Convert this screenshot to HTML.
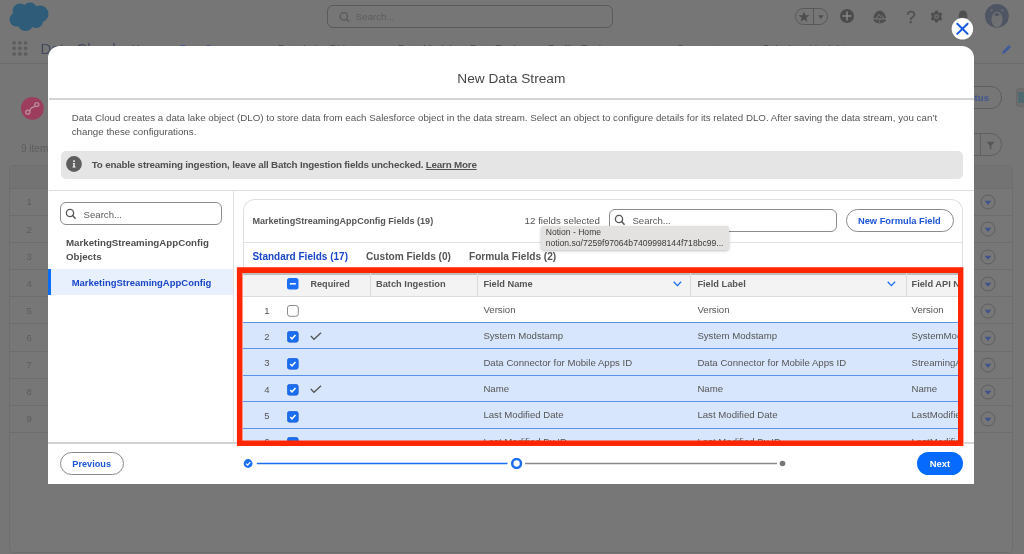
<!DOCTYPE html>
<html><head><meta charset="utf-8">
<style>
*{box-sizing:border-box;margin:0;padding:0}
html,body{width:1024px;height:554px;overflow:hidden}
body{background:#767676;font-family:"Liberation Sans",sans-serif;position:relative}
.a{position:absolute}
.t{position:absolute;white-space:nowrap;line-height:1}
</style></head>
<body><div id="root" style="position:absolute;left:0;top:0;width:1024px;height:554px;will-change:transform">
<div class="a" style="left:0px;top:0px;width:1024px;height:64px;background:#767676;border-bottom:1px solid #6b6b6b"></div>
<div class="a" style="left:9.2px;top:164.7px;width:1003.8px;height:388px;background:#777777;border:1px solid #6e6e6e;border-radius:4px"></div>
<svg class="a" style="left:7px;top:1px" width="45" height="31" viewBox="0 0 45 31">
<g fill="#2f5d79"><circle cx="13" cy="10" r="7.5"/><circle cx="23" cy="9" r="7.5"/><circle cx="33" cy="13" r="8.5"/><circle cx="9.5" cy="18.5" r="7"/><circle cx="18.5" cy="22" r="8"/><circle cx="29" cy="20" r="7"/><circle cx="21" cy="15" r="8"/></g></svg>
<div class="a" style="left:327.4px;top:5.1px;width:285.6px;height:22.6px;border:1.2px solid #5a5a5a;border-radius:6px"></div>
<svg class="a" style="left:338px;top:10px" width="14" height="14" viewBox="0 0 14 14"><circle cx="5.8" cy="6.4" r="3.7" fill="none" stroke="#5a5a5a" stroke-width="1.3"/><path d="M8.5 9.2 L11.2 11.8" stroke="#5a5a5a" stroke-width="1.4"/></svg>
<div class="t" style="left:355.80px;top:11.69px;font-size:9.7px;color:#5d5d5d;">Search...</div>
<div class="a" style="left:795.1px;top:8px;width:33px;height:16.7px;border:1.4px solid #585858;border-radius:9px"></div>
<div class="a" style="left:812.5px;top:8.5px;width:1.2px;height:16px;background:#585858"></div>
<svg class="a" style="left:797.9px;top:10.5px" width="12" height="12" viewBox="-6 -6 12 12"><path d="M0,-5.6 L1.45,-1.8 L5.6,-1.8 L2.3,0.75 L3.5,4.8 L0,2.4 L-3.5,4.8 L-2.3,0.75 L-5.6,-1.8 L-1.45,-1.8Z" fill="#4e4e4e"/></svg>
<svg class="a" style="left:817.5px;top:15.2px" width="6" height="4.2"><path d="M0.2 0.2 L5.6 0.2 L2.9 3.9z" fill="#4e4e4e"/></svg>
<svg class="a" style="left:839.9px;top:9.2px" width="14" height="14"><circle cx="7" cy="7" r="7" fill="#4b4b4b"/><path d="M7 2.4v9.2M2.4 7h9.2" stroke="#878787" stroke-width="1.5"/></svg>
<svg class="a" style="left:873px;top:9.5px" width="14" height="14" viewBox="0 0 14 14"><path d="M0.4 8.3 C0.6 4.5 3.5 0.6 6.7 0.5 C9.9 0.6 12.8 4.5 13 8.3 Z" fill="#4e4e4e"/><path d="M3.5 8 L6 4.5 L7.5 6.5 L8.5 5.5 L10.5 8" fill="none" stroke="#767676" stroke-width="1"/><path d="M0.3 9.5 H13.1 C12.8 11.8 10 13.4 6.7 13.4 C3.4 13.4 0.6 11.8 0.3 9.5Z" fill="#4e4e4e"/><path d="M7.2 9.5 L6.4 11 L7 13.4" stroke="#767676" stroke-width="0.8" fill="none"/></svg>
<div class="t" style="left:906.20px;top:8.51px;font-size:17px;color:#505050;-webkit-text-stroke:0.3px #505050">?</div>
<svg class="a" style="left:930.4px;top:10.1px" width="13" height="13" viewBox="-6.5 -6.5 13 13"><g fill="#4e4e4e"><circle r="4.6"/><g id="th"><rect x="-1.5" y="-6" width="3" height="3" rx="0.8"/></g><use href="#th" transform="rotate(60)"/><use href="#th" transform="rotate(120)"/><use href="#th" transform="rotate(180)"/><use href="#th" transform="rotate(240)"/><use href="#th" transform="rotate(300)"/></g><circle r="2.5" fill="#6c6c6c"/><circle r="1" fill="#4e4e4e"/></svg>
<svg class="a" style="left:957.5px;top:9.5px" width="10" height="12"><path d="M5 0.5 C8 0.5 9.2 3 9.2 5.5 L9.2 11.5 H0.8 L0.8 5.5 C0.8 3 2 0.5 5 0.5Z" fill="#4e4e4e"/></svg>
<svg class="a" style="left:984px;top:3.2px" width="26" height="26" viewBox="0 0 26 26"><defs><clipPath id="avc"><circle cx="12.9" cy="12.9" r="11.9"/></clipPath></defs><circle cx="12.9" cy="12.9" r="11.9" fill="#4f5562"/><g clip-path="url(#avc)"><ellipse cx="13" cy="16.5" rx="5.6" ry="7.7" fill="#6f7072"/></g><circle cx="7.5" cy="7.5" r="1.1" fill="#6f7072"/><circle cx="18.3" cy="7.5" r="1.1" fill="#6f7072"/><ellipse cx="12.9" cy="11.5" rx="2.5" ry="1.5" fill="#4f5562"/></svg>
<svg class="a" style="left:12px;top:40px" width="17" height="17"><g fill="#5e5e5e"><circle cx="2.1" cy="2.8" r="1.9"/><circle cx="7.9" cy="2.8" r="1.9"/><circle cx="13.6" cy="2.8" r="1.9"/><circle cx="2.1" cy="8.3" r="1.9"/><circle cx="7.9" cy="8.3" r="1.9"/><circle cx="13.6" cy="8.3" r="1.9"/><circle cx="2.1" cy="13.9" r="1.9"/><circle cx="7.9" cy="13.9" r="1.9"/><circle cx="13.6" cy="13.9" r="1.9"/></g></svg>
<div class="t" style="left:40.50px;top:41.30px;font-size:15px;color:#414a5c;">Data Cloud</div>
<div class="t" style="left:132.00px;top:43.71px;font-size:10.5px;color:#4a4a4a;">Home</div>
<div class="t" style="left:180.00px;top:43.71px;font-size:10.5px;color:#3a4f8f;">Data Streams</div>
<div class="t" style="left:278.00px;top:43.71px;font-size:10.5px;color:#4a4a4a;">Data Lake Objects</div>
<div class="t" style="left:398.00px;top:43.71px;font-size:10.5px;color:#4a4a4a;">Data Model</div>
<div class="t" style="left:470.00px;top:43.71px;font-size:10.5px;color:#4a4a4a;">Data Explorer</div>
<div class="t" style="left:548.00px;top:43.71px;font-size:10.5px;color:#4a4a4a;">Profile Explorer</div>
<div class="t" style="left:762.00px;top:43.71px;font-size:10.5px;color:#4a4a4a;">Calculated Insights</div>
<div class="t" style="left:677.00px;top:43.71px;font-size:10.5px;color:#4a4a4a;">Segments</div>
<svg class="a" style="left:1000px;top:44px" width="12" height="12"><path d="M2 10 L3 7 L9 1 L11 3 L5 9 Z" fill="#3f5a99"/></svg>
<svg class="a" style="left:21px;top:97.2px" width="23" height="23"><circle cx="11.4" cy="11.4" r="11.35" fill="#9c3d5e"/><g fill="none" stroke="#b98a9a" stroke-width="1.4"><circle cx="6.8" cy="15.2" r="2"/><circle cx="15.8" cy="7.6" r="2"/><path d="M8.6 14 C10 12 9.5 10.5 11.5 10.5 C13.5 10.5 12.5 9 14.2 8.6"/></g></svg>
<div class="t" style="left:21.00px;top:144.03px;font-size:10px;color:#5c5c5c;">9 items</div>
<div class="a" style="left:10.2px;top:165.7px;width:1001.8px;height:22.3px;background:#737373;border-radius:3px 3px 0 0"></div>
<div class="a" style="left:10px;top:187.8px;width:1003px;height:1px;background:#6d6d6d"></div>
<div class="a" style="left:10px;top:214.92000000000002px;width:1003px;height:1px;background:#6d6d6d"></div>
<div class="a" style="left:10px;top:242.04000000000002px;width:1003px;height:1px;background:#6d6d6d"></div>
<div class="a" style="left:10px;top:269.16px;width:1003px;height:1px;background:#6d6d6d"></div>
<div class="a" style="left:10px;top:296.28000000000003px;width:1003px;height:1px;background:#6d6d6d"></div>
<div class="a" style="left:10px;top:323.4px;width:1003px;height:1px;background:#6d6d6d"></div>
<div class="a" style="left:10px;top:350.52px;width:1003px;height:1px;background:#6d6d6d"></div>
<div class="a" style="left:10px;top:377.64px;width:1003px;height:1px;background:#6d6d6d"></div>
<div class="a" style="left:10px;top:404.76px;width:1003px;height:1px;background:#6d6d6d"></div>
<div class="a" style="left:10px;top:431.88px;width:1003px;height:1px;background:#6d6d6d"></div>
<div class="t" style="left:26.50px;top:197.46px;font-size:9.5px;color:#5c5c5c;">1</div>
<svg class="a" style="left:980px;top:194.30px" width="16" height="16"><circle cx="8" cy="8" r="7" fill="none" stroke="#5e5e5e" stroke-width="1"/><path d="M4.6 6.7 H11.4 L8 10.8Z" fill="#40528a"/></svg>
<div class="t" style="left:26.50px;top:224.58px;font-size:9.5px;color:#5c5c5c;">2</div>
<svg class="a" style="left:980px;top:221.42px" width="16" height="16"><circle cx="8" cy="8" r="7" fill="none" stroke="#5e5e5e" stroke-width="1"/><path d="M4.6 6.7 H11.4 L8 10.8Z" fill="#40528a"/></svg>
<div class="t" style="left:26.50px;top:251.70px;font-size:9.5px;color:#5c5c5c;">3</div>
<svg class="a" style="left:980px;top:248.54px" width="16" height="16"><circle cx="8" cy="8" r="7" fill="none" stroke="#5e5e5e" stroke-width="1"/><path d="M4.6 6.7 H11.4 L8 10.8Z" fill="#40528a"/></svg>
<div class="t" style="left:26.50px;top:278.82px;font-size:9.5px;color:#5c5c5c;">4</div>
<svg class="a" style="left:980px;top:275.66px" width="16" height="16"><circle cx="8" cy="8" r="7" fill="none" stroke="#5e5e5e" stroke-width="1"/><path d="M4.6 6.7 H11.4 L8 10.8Z" fill="#40528a"/></svg>
<div class="t" style="left:26.50px;top:305.94px;font-size:9.5px;color:#5c5c5c;">5</div>
<svg class="a" style="left:980px;top:302.78px" width="16" height="16"><circle cx="8" cy="8" r="7" fill="none" stroke="#5e5e5e" stroke-width="1"/><path d="M4.6 6.7 H11.4 L8 10.8Z" fill="#40528a"/></svg>
<div class="t" style="left:26.50px;top:333.06px;font-size:9.5px;color:#5c5c5c;">6</div>
<svg class="a" style="left:980px;top:329.90px" width="16" height="16"><circle cx="8" cy="8" r="7" fill="none" stroke="#5e5e5e" stroke-width="1"/><path d="M4.6 6.7 H11.4 L8 10.8Z" fill="#40528a"/></svg>
<div class="t" style="left:26.50px;top:360.18px;font-size:9.5px;color:#5c5c5c;">7</div>
<svg class="a" style="left:980px;top:357.02px" width="16" height="16"><circle cx="8" cy="8" r="7" fill="none" stroke="#5e5e5e" stroke-width="1"/><path d="M4.6 6.7 H11.4 L8 10.8Z" fill="#40528a"/></svg>
<div class="t" style="left:26.50px;top:387.30px;font-size:9.5px;color:#5c5c5c;">8</div>
<svg class="a" style="left:980px;top:384.14px" width="16" height="16"><circle cx="8" cy="8" r="7" fill="none" stroke="#5e5e5e" stroke-width="1"/><path d="M4.6 6.7 H11.4 L8 10.8Z" fill="#40528a"/></svg>
<div class="t" style="left:26.50px;top:414.42px;font-size:9.5px;color:#5c5c5c;">9</div>
<svg class="a" style="left:980px;top:411.26px" width="16" height="16"><circle cx="8" cy="8" r="7" fill="none" stroke="#5e5e5e" stroke-width="1"/><path d="M4.6 6.7 H11.4 L8 10.8Z" fill="#40528a"/></svg>
<div class="a" style="left:930px;top:86.2px;width:71.5px;height:22.4px;border:1.1px solid #5e5e5e;border-radius:11px"></div>
<div class="t" style="left:974.60px;top:92.77px;font-size:9.6px;color:#415690;font-weight:bold;">tus</div>
<div class="a" style="left:1015.5px;top:88px;width:10px;height:19px;border:1px solid #686868;border-radius:3px;background:#6e6e6e"></div>
<div class="a" style="left:1017.5px;top:92px;width:7px;height:11px;background:#4e6a70"></div>
<div class="a" style="left:930px;top:133px;width:71.5px;height:22.5px;border:1px solid #606060;border-radius:0 11px 11px 0"></div>
<div class="a" style="left:979.5px;top:133px;width:1px;height:22.5px;background:#606060"></div>
<svg class="a" style="left:985.5px;top:140.5px" width="9" height="9"><path d="M0.5 0.8 H8.5 L5.3 4.6 V8.3 L3.7 8.3 V4.6Z" fill="#565656"/></svg>
<div class="a" style="left:48px;top:46px;width:926px;height:437.8px;background:#fff;border-radius:12px 12px 0 0"></div>
<div class="t" style="left:457.30px;top:71.50px;font-size:13.7px;color:#474747;">New Data Stream</div>
<div class="a" style="left:48.5px;top:98px;width:925.5px;height:1.5px;background:#d4d4d4"></div>
<div class="t" style="left:71.70px;top:113.34px;font-size:9.76px;color:#555;">Data Cloud creates a data lake object (DLO) to store data from each Salesforce object in the data stream. Select an object to configure details for its related DLO. After saving the data stream, you can’t</div>
<div class="t" style="left:71.70px;top:127.04px;font-size:9.76px;color:#555;">change these configurations.</div>
<div class="a" style="left:60.5px;top:150.5px;width:902.5px;height:28.5px;background:#e5e5e5;border-radius:5px"></div>
<svg class="a" style="left:66.1px;top:156.1px" width="16" height="16"><circle cx="8" cy="8" r="7.9" fill="#5e5e5e"/><circle cx="8" cy="5.1" r="0.95" fill="#fff"/><path d="M6.9 6.9 H8.7 V10.6 H9.5 V11.6 H6.6 V10.6 H7.4 V7.8 H6.9Z" fill="#fff"/></svg>
<div class="t" style="left:91.80px;top:160.00px;font-size:9.8px;color:#505050;font-weight:bold;letter-spacing:-0.19px">To enable streaming ingestion, leave all Batch Ingestion fields unchecked. <span style="text-decoration:underline">Learn More</span></div>
<div class="a" style="left:48.5px;top:190px;width:925.5px;height:1px;background:#dedede"></div>
<div class="a" style="left:232.6px;top:190.5px;width:1.4px;height:253px;background:#e2e2e2"></div>
<div class="a" style="left:60.2px;top:202.3px;width:161.8px;height:22.7px;border:1.1px solid #8c8c8c;border-radius:6px"></div>
<svg class="a" style="left:64.70px;top:207.60px" width="12" height="12" viewBox="0 0 12 12"><circle cx="5" cy="5" r="3.6" fill="none" stroke="#555" stroke-width="1.3"/><path d="M7.6 7.6 L10.1 10.2" stroke="#555" stroke-width="1.5" stroke-linecap="round"/></svg>
<div class="t" style="left:83.60px;top:209.77px;font-size:9.6px;color:#5a5a5a;">Search...</div>
<div class="t" style="left:66.00px;top:238.08px;font-size:9.71px;color:#4e4e4e;font-weight:bold;">MarketingStreamingAppConfig</div>
<div class="t" style="left:66.00px;top:251.58px;font-size:9.71px;color:#4e4e4e;font-weight:bold;">Objects</div>
<div class="a" style="left:48px;top:269px;width:184.6px;height:25.8px;background:#e9f0fd"></div>
<div class="a" style="left:48px;top:269px;width:3.2px;height:25.8px;background:#0b6cf5"></div>
<div class="t" style="left:71.70px;top:278.17px;font-size:9.49px;color:#1a46c8;font-weight:bold;">MarketingStreamingAppConfig</div>
<div class="a" style="left:242.8px;top:199.2px;width:720px;height:260px;border:1.2px solid #e0e0e0;border-bottom:none;border-radius:12px 12px 0 0"></div>
<div class="a" style="left:234px;top:443px;width:740px;height:40px;background:#fff"></div>
<div class="t" style="left:252.40px;top:216.82px;font-size:9.07px;color:#555;font-weight:bold;">MarketingStreamingAppConfig Fields (19)</div>
<div class="t" style="left:524.60px;top:216.04px;font-size:9.76px;color:#555;">12 fields selected</div>
<div class="a" style="left:609px;top:209px;width:228px;height:22.5px;border:1.1px solid #8c8c8c;border-radius:6px"></div>
<svg class="a" style="left:613.60px;top:214.10px" width="12" height="12" viewBox="0 0 12 12"><circle cx="5" cy="5" r="3.6" fill="none" stroke="#555" stroke-width="1.3"/><path d="M7.6 7.6 L10.1 10.2" stroke="#555" stroke-width="1.5" stroke-linecap="round"/></svg>
<div class="t" style="left:632.40px;top:215.97px;font-size:9.6px;color:#5a5a5a;">Search...</div>
<div class="a" style="left:846px;top:209px;width:107.5px;height:22.8px;border:1px solid #8a8a8a;border-radius:12px"></div>
<div class="t" style="left:857.90px;top:216.59px;font-size:9.34px;color:#1d55d6;font-weight:bold;">New Formula Field</div>
<div class="a" style="left:244px;top:241.5px;width:718px;height:1px;background:#e2e2e2"></div>
<div class="t" style="left:252.40px;top:251.84px;font-size:10.0px;color:#1a46c8;font-weight:bold;">Standard Fields (17)</div>
<div class="t" style="left:366.00px;top:251.72px;font-size:10.13px;color:#555;font-weight:bold;">Custom Fields (0)</div>
<div class="t" style="left:469.00px;top:251.72px;font-size:10.13px;color:#555;font-weight:bold;">Formula Fields (2)</div>
<div class="a" style="left:242.5px;top:273px;width:715.5px;height:167.5px;overflow:hidden;background:#fff">
<div class="a" style="left:0.0px;top:0px;width:715.5px;height:23px;background:#f3f3f3"></div>
<div class="a" style="left:0.0px;top:0.19999999999998863px;width:715.5px;height:1.4px;background:#bdbdbd"></div>
<div class="a" style="left:0.5px;top:22.5px;width:715px;height:1px;background:#dcdcdc"></div>
<div class="a" style="left:127.10000000000002px;top:0px;width:1px;height:23px;background:#dcdcdc"></div>
<div class="a" style="left:234.10000000000002px;top:0px;width:1px;height:23px;background:#dcdcdc"></div>
<div class="a" style="left:447.79999999999995px;top:0px;width:1px;height:23px;background:#dcdcdc"></div>
<div class="a" style="left:663.0px;top:0px;width:1px;height:23px;background:#dcdcdc"></div>
<svg class="a" style="left:44.5px;top:5.399999999999977px" width="12" height="12"><rect x="0" y="0" width="11.5" height="11.5" rx="2.5" fill="#1b6ef3"/><rect x="2.8" y="5" width="6" height="1.6" fill="#fff"/></svg>
<div class="t" style="left:68.00px;top:6.79px;font-size:9.11px;color:#555;font-weight:bold;">Required</div>
<div class="t" style="left:133.50px;top:6.64px;font-size:9.29px;color:#555;font-weight:bold;">Batch Ingestion</div>
<div class="t" style="left:240.90px;top:6.66px;font-size:9.26px;color:#555;font-weight:bold;">Field Name</div>
<div class="t" style="left:454.90px;top:6.66px;font-size:9.26px;color:#555;font-weight:bold;">Field Label</div>
<div class="t" style="left:669.00px;top:6.66px;font-size:9.26px;color:#555;font-weight:bold;">Field API Name</div>
<svg class="a" style="left:430.20000000000005px;top:8.199999999999989px" width="9" height="6"><path d="M0.7 0.7 L4.4 4.6 L8.1 0.7" fill="none" stroke="#1b6ef3" stroke-width="1.3"/></svg>
<svg class="a" style="left:644.9px;top:8.199999999999989px" width="9" height="6"><path d="M0.7 0.7 L4.4 4.6 L8.1 0.7" fill="none" stroke="#1b6ef3" stroke-width="1.3"/></svg>
<div class="t" style="left:21.70px;top:32.56px;font-size:9.5px;color:#555;">1</div>
<svg class="a" style="left:44.5px;top:32.39999999999998px" width="12" height="12"><rect x="0.5" y="0.5" width="10.8" height="10.8" rx="2.5" fill="#fff" stroke="#8a8a8a" stroke-width="1"/></svg>
<div class="t" style="left:240.90px;top:31.95px;font-size:9.63px;color:#555;">Version</div>
<div class="t" style="left:454.90px;top:31.95px;font-size:9.63px;color:#555;">Version</div>
<div class="t" style="left:669.00px;top:31.95px;font-size:9.63px;color:#555;">Version</div>
<div class="a" style="left:0.5px;top:48.89999999999998px;width:715px;height:26.47px;background:#d8e6fd"></div>
<div class="a" style="left:0.5px;top:49px;width:715px;height:1px;background:#5a92ea"></div>
<div class="t" style="left:21.70px;top:58.94px;font-size:9.5px;color:#555;">2</div>
<svg class="a" style="left:44.5px;top:58.299999999999955px" width="12" height="12"><rect x="0.3" y="0.3" width="11" height="11" rx="2.5" fill="#1b6ef3" stroke="#1556c8" stroke-width="0.6"/><path d="M3.2 6 L5 7.8 L8.5 4" fill="none" stroke="#fff" stroke-width="1.5"/></svg>
<svg class="a" style="left:67.5px;top:58.89999999999998px" width="12" height="9"><path d="M0.8 4 L4 7.3 L11 0.8" fill="none" stroke="#555" stroke-width="1.3"/></svg>
<div class="t" style="left:240.90px;top:58.33px;font-size:9.63px;color:#555;">System Modstamp</div>
<div class="t" style="left:454.90px;top:58.33px;font-size:9.63px;color:#555;">System Modstamp</div>
<div class="t" style="left:669.00px;top:58.33px;font-size:9.63px;color:#555;">SystemModstamp</div>
<div class="a" style="left:0.5px;top:75.37px;width:715px;height:26.47px;background:#d8e6fd"></div>
<div class="a" style="left:0.5px;top:75px;width:715px;height:1px;background:#5a92ea"></div>
<div class="t" style="left:21.70px;top:85.32px;font-size:9.5px;color:#555;">3</div>
<svg class="a" style="left:44.5px;top:84.76999999999998px" width="12" height="12"><rect x="0.3" y="0.3" width="11" height="11" rx="2.5" fill="#1b6ef3" stroke="#1556c8" stroke-width="0.6"/><path d="M3.2 6 L5 7.8 L8.5 4" fill="none" stroke="#fff" stroke-width="1.5"/></svg>
<div class="t" style="left:240.90px;top:84.71px;font-size:9.63px;color:#555;">Data Connector for Mobile Apps ID</div>
<div class="t" style="left:454.90px;top:84.71px;font-size:9.63px;color:#555;">Data Connector for Mobile Apps ID</div>
<div class="t" style="left:669.00px;top:84.71px;font-size:9.63px;color:#555;">StreamingAppDataConnector</div>
<div class="a" style="left:0.5px;top:101.83999999999997px;width:715px;height:26.47px;background:#d8e6fd"></div>
<div class="a" style="left:0.5px;top:102px;width:715px;height:1px;background:#5a92ea"></div>
<div class="t" style="left:21.70px;top:111.70px;font-size:9.5px;color:#555;">4</div>
<svg class="a" style="left:44.5px;top:111.23999999999995px" width="12" height="12"><rect x="0.3" y="0.3" width="11" height="11" rx="2.5" fill="#1b6ef3" stroke="#1556c8" stroke-width="0.6"/><path d="M3.2 6 L5 7.8 L8.5 4" fill="none" stroke="#fff" stroke-width="1.5"/></svg>
<svg class="a" style="left:67.5px;top:111.83999999999997px" width="12" height="9"><path d="M0.8 4 L4 7.3 L11 0.8" fill="none" stroke="#555" stroke-width="1.3"/></svg>
<div class="t" style="left:240.90px;top:111.09px;font-size:9.63px;color:#555;">Name</div>
<div class="t" style="left:454.90px;top:111.09px;font-size:9.63px;color:#555;">Name</div>
<div class="t" style="left:669.00px;top:111.09px;font-size:9.63px;color:#555;">Name</div>
<div class="a" style="left:0.5px;top:128.30999999999995px;width:715px;height:26.47px;background:#d8e6fd"></div>
<div class="a" style="left:0.5px;top:128px;width:715px;height:1px;background:#5a92ea"></div>
<div class="t" style="left:21.70px;top:138.08px;font-size:9.5px;color:#555;">5</div>
<svg class="a" style="left:44.5px;top:137.70999999999992px" width="12" height="12"><rect x="0.3" y="0.3" width="11" height="11" rx="2.5" fill="#1b6ef3" stroke="#1556c8" stroke-width="0.6"/><path d="M3.2 6 L5 7.8 L8.5 4" fill="none" stroke="#fff" stroke-width="1.5"/></svg>
<div class="t" style="left:240.90px;top:137.47px;font-size:9.63px;color:#555;">Last Modified Date</div>
<div class="t" style="left:454.90px;top:137.47px;font-size:9.63px;color:#555;">Last Modified Date</div>
<div class="t" style="left:669.00px;top:137.47px;font-size:9.63px;color:#555;">LastModifiedDate</div>
<div class="a" style="left:0.5px;top:154.77999999999997px;width:715px;height:26.47px;background:#d8e6fd"></div>
<div class="a" style="left:0.5px;top:155px;width:715px;height:1px;background:#5a92ea"></div>
<div class="t" style="left:21.70px;top:164.46px;font-size:9.5px;color:#555;">6</div>
<svg class="a" style="left:44.5px;top:164.17999999999995px" width="12" height="12"><rect x="0.3" y="0.3" width="11" height="11" rx="2.5" fill="#1b6ef3" stroke="#1556c8" stroke-width="0.6"/><path d="M3.2 6 L5 7.8 L8.5 4" fill="none" stroke="#fff" stroke-width="1.5"/></svg>
<div class="t" style="left:240.90px;top:163.85px;font-size:9.63px;color:#555;">Last Modified By ID</div>
<div class="t" style="left:454.90px;top:163.85px;font-size:9.63px;color:#555;">Last Modified By ID</div>
<div class="t" style="left:669.00px;top:163.85px;font-size:9.63px;color:#555;">LastModifiedById</div>
</div>
<svg class="a" style="left:0;top:0" width="1024" height="554"><path fill-rule="evenodd" fill="#ff2600" d="M236.9 267.3 H963.4 V446.1 H236.9Z M242.5 272.9 V440.5 H958 V272.9Z"/></svg>
<div class="a" style="left:48px;top:442.4px;width:188.5px;height:1.5px;background:#d2d2d2"></div>
<div class="a" style="left:963.5px;top:442.4px;width:10.5px;height:1.5px;background:#d8d8d8"></div>
<div class="a" style="left:60px;top:452.3px;width:63.7px;height:22.3px;border:1px solid #8a8a8a;border-radius:12px"></div>
<div class="t" style="left:72.30px;top:459.85px;font-size:9.16px;color:#1d55d6;font-weight:bold;">Previous</div>
<svg class="a" style="left:243px;top:458px" width="545" height="11"><path d="M13.8 5.5 H264.5" stroke="#1b6ef3" stroke-width="1.6"/><path d="M282 5.5 H534" stroke="#8a8a8a" stroke-width="1.4"/><circle cx="5.1" cy="5.5" r="4.4" fill="#1b6ef3"/><path d="M3 5.6 L4.6 7.1 L7.3 4.2" fill="none" stroke="#fff" stroke-width="1.2"/><circle cx="273.6" cy="5.5" r="4.4" fill="#fff" stroke="#1b6ef3" stroke-width="2.5"/><circle cx="539.5" cy="5.5" r="2.8" fill="#777"/></svg>
<div class="a" style="left:917.2px;top:452.2px;width:45.4px;height:22.7px;background:#066afe;border-radius:12px"></div>
<div class="t" style="left:929.80px;top:459.43px;font-size:9.41px;color:#fff;font-weight:bold;">Next</div>
<div class="a" style="left:541px;top:226.2px;width:188.2px;height:23.8px;background:#e3e2e0;border-radius:3px;box-shadow:0 1px 3px rgba(0,0,0,0.25)"></div>
<div class="t" style="left:545.70px;top:228.32px;font-size:8.6px;color:#3a3a3a;">Notion - Home</div>
<div class="t" style="left:545.70px;top:238.82px;font-size:8.6px;color:#3a3a3a;">notion.so/7259f97064b7409998144f718bc99...</div>
<svg class="a" style="left:950px;top:17px" width="25" height="25"><circle cx="12.4" cy="11.8" r="11.6" fill="#6c6c6c" opacity="0.6"/><circle cx="12.4" cy="11.8" r="10.8" fill="#fff"/><path d="M7.3 6.7 L17.6 16.9 M17.6 6.7 L7.3 16.9" stroke="#1459e3" stroke-width="2" stroke-linecap="round"/></svg>
</div></body></html>
